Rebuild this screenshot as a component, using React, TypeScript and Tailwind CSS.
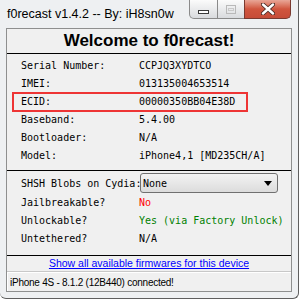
import React from "react";

const mono = { fontFamily: '"DejaVu Sans Mono", "Liberation Mono", monospace' } as const;
const sans = { fontFamily: '"Liberation Sans", Arial, sans-serif' } as const;

function Row({ label, children }: { label: string; children: React.ReactNode }) {
  return (
    <div className="flex h-[18px] items-center pl-[14px] text-[10px] text-black" style={mono}>
      <div className="w-[118px] shrink-0 whitespace-pre">{label}</div>
      <div className="whitespace-pre">{children}</div>
    </div>
  );
}

export default function App() {
  return (
    <div className="relative h-[300px] w-[299px] overflow-hidden bg-white">
      <div className="relative flex h-[299px] w-[299px] flex-col rounded-b-[6px] border-b border-r border-[#5f5f5f] bg-[#eef0f2]">
        {/* title bar */}
        <div className="relative h-[28px] shrink-0">
          <div className="flex h-[28px] items-center pl-[7px] text-[12.5px] text-black" style={sans}>
            f0recast v1.4.2 -- By: iH8sn0w
          </div>
          <div className="absolute left-[189px] top-0 flex h-[19px]">
            <div className="flex h-[19px] w-[29px] items-end justify-center rounded-bl-[5px] border border-t-0 border-[#8a8a8a] bg-gradient-to-b from-[#fbfbfb] to-[#d9dbde] pb-[4px]">
              <div className="h-[4px] w-[11px] border border-[#3a3a3a] bg-white" />
            </div>
            <div className="flex h-[19px] w-[26px] items-center justify-center border-b border-[#8a8a8a] bg-gradient-to-b from-[#fbfbfb] to-[#d9dbde]">
              <div className="flex h-[9px] w-[10px] items-center justify-center border border-[#b9b9b9]">
                <div className="h-[3px] w-[6px] border border-[#c9c9c9]" />
              </div>
            </div>
            <div className="flex h-[19px] w-[47px] items-center justify-center rounded-br-[5px] border border-t-0 border-[#7a3a30] bg-gradient-to-b from-[#e8a697] via-[#d0553e] to-[#c64c38]">
              <svg width="14" height="12" viewBox="0 0 14 12">
                <path d="M2 1.5 L12 10.5 M12 1.5 L2 10.5" stroke="#4a2a24" strokeWidth="4.2" strokeLinecap="round" />
                <path d="M2 1.5 L12 10.5 M12 1.5 L2 10.5" stroke="#ffffff" strokeWidth="2.4" strokeLinecap="round" />
              </svg>
            </div>
          </div>
        </div>

        {/* client */}
        <div className="mx-[6px] flex h-[264px] shrink-0 flex-col border border-[#8e8f8f] bg-[#f0f0f0]">
          <div className="flex h-[25px] shrink-0 items-center justify-center border-b border-black text-[17px] font-bold text-black" style={sans}>
            Welcome to f0recast!
          </div>

          <div className="shrink-0 border-b border-black pb-[6px] pt-[2px]">
            <Row label="Serial Number:">CCPJQ3XYDTCO</Row>
            <Row label="IMEI:">013135004653514</Row>
            <Row label="ECID:">00000350BB04E38D</Row>
            <Row label="Baseband:">5.4.00</Row>
            <Row label="Bootloader:">N/A</Row>
            <Row label="Model:">iPhone4,1 [MD235CH/A]</Row>
          </div>

          <div className="shrink-0 border-b border-black pb-[8px] pt-[2px]">
            <div className="flex h-[20px] items-center pl-[14px] text-[10px] text-black" style={mono}>
              <div className="w-[118px] shrink-0 whitespace-pre">SHSH Blobs on Cydia:</div>
              <div className="ml-[1px] flex h-[20px] w-[138px] items-center justify-between rounded-[3px] border border-[#707070] bg-gradient-to-b from-[#f3f3f3] to-[#dcdcdc] pl-[2px] pr-[5px]">
                <span>None</span>
                <svg width="8" height="5" viewBox="0 0 8 5">
                  <path d="M0 0 H8 L4 5 Z" fill="#000" />
                </svg>
              </div>
            </div>
            <Row label="Jailbreakable?">
              <span className="text-[#ff0000]">No</span>
            </Row>
            <Row label="Unlockable?">
              <span className="text-[#008000]">Yes (via Factory Unlock)</span>
            </Row>
            <Row label="Untethered?">N/A</Row>
          </div>

          <div className="flex h-[15px] shrink-0 items-center justify-center text-[10.5px] text-[#0000ff] underline" style={sans}>
            Show all available firmwares for this device
          </div>

          <div className="flex flex-1 border-t border-[#c8c8c8]">
            <div className="flex flex-1 items-center border-l border-t border-white pl-[2px] text-[10px] tracking-[-0.25px] text-black" style={sans}>
              iPhone 4S - 8.1.2 (12B440) connected!
            </div>
          </div>
        </div>
      </div>

      {/* red highlight box */}
      <div className="absolute left-[12px] top-[92px] h-[20px] w-[236px] border-2 border-[#ee3535]" />
    </div>
  );
}
